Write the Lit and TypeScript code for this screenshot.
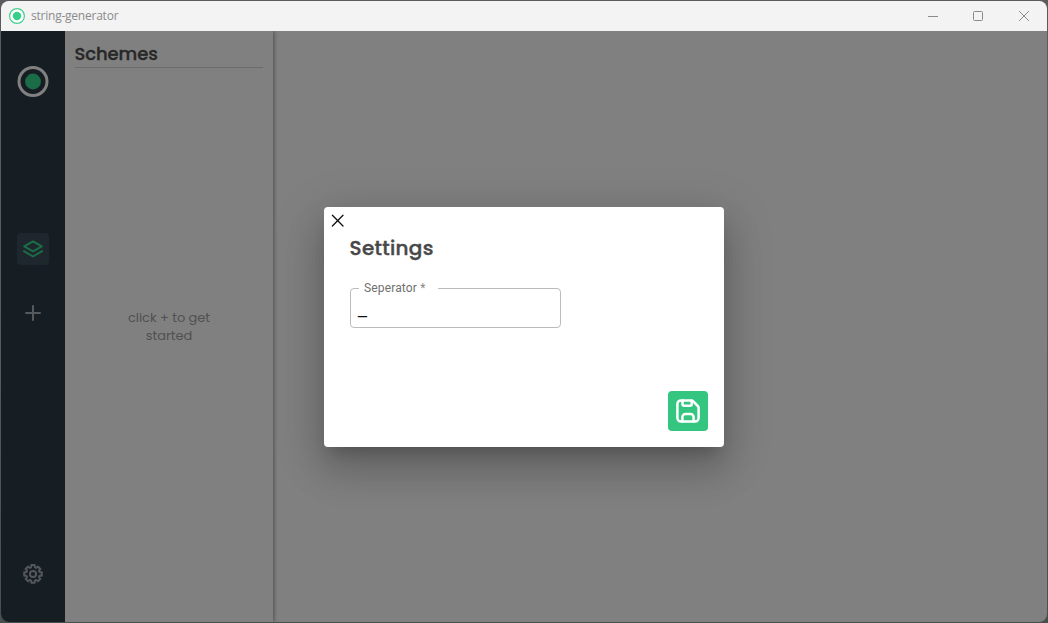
import { LitElement, html, css, svg } from "lit";
import { customElement, property } from "lit/decorators.js";

const glyphs: Record<string, unknown> = {
  layers: svg`<path d="M12 4.3 20.8 9.3 12 14.3 3.2 9.3Z"/><path d="M2.9 14.2 12 19.5 21.1 14.2"/>`,
  plus: svg`<path d="M12 5v14M5 12h14"/>`,
  gear: svg`<circle cx="12" cy="12" r="3.1"/><path d="M10.3 3.1h3.4v1.5q0 .8.8 1.1t1.4-.2l1-1 2.5 2.5-1 1q-.6.6-.3 1.4t1.1.8h1.6v3.5h-1.6q-.8 0-1.1.8t.3 1.4l1 1-2.5 2.5-1-1q-.6-.6-1.4-.3t-.8 1.1v1.6h-3.4v-1.6q0-.8-.8-1.1t-1.4.3l-1 1-2.5-2.5 1-1q.6-.6.3-1.4t-1.1-.8H3.2v-3.5h1.6q.8 0 1.1-.8t-.3-1.4l-1-1 2.5-2.5 1 1q.6.5 1.4.2t.8-1.1Z"/>`,
  close: svg`<path d="M6.4 6.3 17 17M17 6.3 6.4 17"/>`,
  save: svg`<path d="M5 1.4h10.2q1 0 1.8.8l4.8 4.8q.8.8.8 1.8V19a3.6 3.6 0 0 1-3.6 3.6H5A3.6 3.6 0 0 1 1.4 19V5A3.6 3.6 0 0 1 5 1.4Z"/><path d="M6.5 1.5v4.1q0 1.2 1.2 1.2h6.8q1.2 0 1.2-1.2V1.5"/><path d="M6.4 22.4v-4.3a3.1 3.1 0 0 1 3.1-3.1h5a3.1 3.1 0 0 1 3.1 3.1v4.3"/>`,
};

@customElement("line-icon")
export class LineIcon extends LitElement {
  @property() name = "";
  static styles = css`
    :host { display: block; width: 24px; height: 24px; }
    svg { display: block; width: 100%; height: 100%; fill: none; stroke: currentColor;
      stroke-width: var(--stroke, 2); stroke-linecap: round; stroke-linejoin: round; }
  `;
  render() {
    return html`<svg viewBox="0 0 24 24">${glyphs[this.name]}</svg>`;
  }
}

@customElement("app-root")
export class AppRoot extends LitElement {
  static styles = css`
    * { box-sizing: border-box; }
    :host { display: block; height: 623px; padding: 1px; box-sizing: border-box;
      background: linear-gradient(180deg, #5b5a5f 0 50%, #45504f 100%);
      font-family: Poppins, Inter, "Open Sans", sans-serif; }
    .window { height: 621px; display: flex; flex-direction: column; border-radius: 8px; overflow: hidden; background: #808080; }
    .titlebar { height: 30px; flex: none; display: flex; align-items: center; background: #f3f3f3; padding-left: 8px;
      font: 12px/16px "Open Sans", "Noto Sans", sans-serif; color: #8b8b8b; }
    .mark { width: 16px; height: 16px; margin-top: -1px; margin-right: 6px; }
    .apptitle { flex: 1; letter-spacing: -0.23px; }
    .controls { display: flex; height: 30px; margin-top: -1px; }
    .controls svg { display: block; width: 46px; height: 30px; fill: none; stroke: #8b8b8b; }
    .content { flex: 1; display: flex; position: relative; min-height: 0; overflow: hidden; }
    .sidebar { width: 64px; background: #161d23; display: flex; flex-direction: column; align-items: center; padding-top: 35px; }
    .logo { width: 32px; height: 32px; flex: none; }
    .tab { width: 32px; height: 32px; margin-top: 135px; border-radius: 4px; background: #1f272e; color: #1a6d45;
      display: grid; place-items: center; --stroke: 2; }
    .add { margin-top: 36px; color: #565a5d; --stroke: 2; }
    .gear { margin-top: auto; margin-bottom: 36px; --stroke: 2; color: #53575b; }
    .panel { width: 208px; display: flex; flex-direction: column; padding: 0 10px; background: #808080;
      box-shadow: 1px 0 4px rgba(0,0,0,.4); clip-path: inset(0 -8px 0 0); }
    .heading { margin: 0; height: 37px; padding-top: 11px; border-bottom: 1px solid #6b6b6b;
      font-size: 18px; line-height: 24px; font-weight: 500; color: #272727; text-indent: -.5px; letter-spacing: -.1px;
      -webkit-text-stroke: .3px currentColor; }
    .empty { margin: 241px 0 0; text-align: center; font-size: 13px; line-height: 18px; color: #505050; letter-spacing: -.05px; }
    .overlay { position: absolute; inset: 0 0 -1px 0; display: flex; align-items: center; justify-content: center; }
    .dialog { width: 400px; height: 240px; background: #fff; border-radius: 4px; display: flex; flex-direction: column;
      box-shadow: 0 11px 15px -7px rgba(0,0,0,.2), 0 24px 38px 3px rgba(0,0,0,.14), 0 9px 46px 8px rgba(0,0,0,.12); }
    .close { margin: 2px 0 0 2px; color: #111; --stroke: 1.3; }
    .title { margin: 0 0 0 25.5px; font-size: 20px; line-height: 30px; font-weight: 500; color: #484848; letter-spacing: .3px;
      -webkit-text-stroke: .4px currentColor; }
    .field { width: 211px; height: 47px; margin: 18px 0 0 26px; padding: 0 0 0 8px; border: 1px solid #bcbcbc; border-radius: 4px;
      font-family: Roboto, sans-serif; font-size: 16px; color: #111; min-width: 0; }
    .field legend { width: 79px; padding: 0 0 0 5px; font-size: 12px; line-height: 14px; letter-spacing: .15px; color: #707070; }
    .star { color: #888; }
    .value { line-height: 20px; padding-top: 4px; height: 26px; margin-left: -1px; font-family: "Liberation Sans", sans-serif; }
    .save { width: 40px; height: 40px; margin: auto 16px 16px auto; border: 0; padding: 0; border-radius: 4px; background: #34c580; color: #fff;
      display: grid; place-items: center; --stroke: 2.5; }
  `;

  render() {
    return html`
      <div class="window">
        <header class="titlebar">
          <svg class="mark" viewBox="0 0 16 16"><circle cx="8" cy="8" r="7.4" fill="#fff" stroke="#43ce8e" stroke-width="1.2"/><circle cx="8" cy="8" r="4.2" fill="#34d08a"/></svg>
          <span class="apptitle">string-generator</span>
          <div class="controls">
            <svg viewBox="0 0 46 30"><path d="M19 15.5h10"/></svg>
            <svg viewBox="0 0 46 30"><rect x="18.5" y="10.5" width="9" height="9" rx="1"/></svg>
            <svg viewBox="0 0 46 30"><path d="m18 10 10 10m0-10-10 10"/></svg>
          </div>
        </header>
        <div class="content">
          <nav class="sidebar">
            <svg class="logo" viewBox="0 0 32 32"><circle cx="16" cy="15.5" r="14" fill="none" stroke="#808080" stroke-width="3"/><circle cx="16" cy="15.5" r="7.9" fill="#1b6d48"/></svg>
            <div class="tab"><line-icon name="layers"></line-icon></div>
            <line-icon class="add" name="plus"></line-icon>
            <line-icon class="gear" name="gear"></line-icon>
          </nav>
          <section class="panel">
            <h2 class="heading">Schemes</h2>
            <p class="empty">click + to get<br />started</p>
          </section>
          <div class="overlay">
            <div class="dialog">
              <line-icon class="close" name="close"></line-icon>
              <h1 class="title">Settings</h1>
              <fieldset class="field">
                <legend>Seperator <span class="star">*</span></legend>
                <div class="value">_</div>
              </fieldset>
              <button class="save" aria-label="Save"><line-icon name="save"></line-icon></button>
            </div>
          </div>
        </div>
      </div>
    `;
  }
}
